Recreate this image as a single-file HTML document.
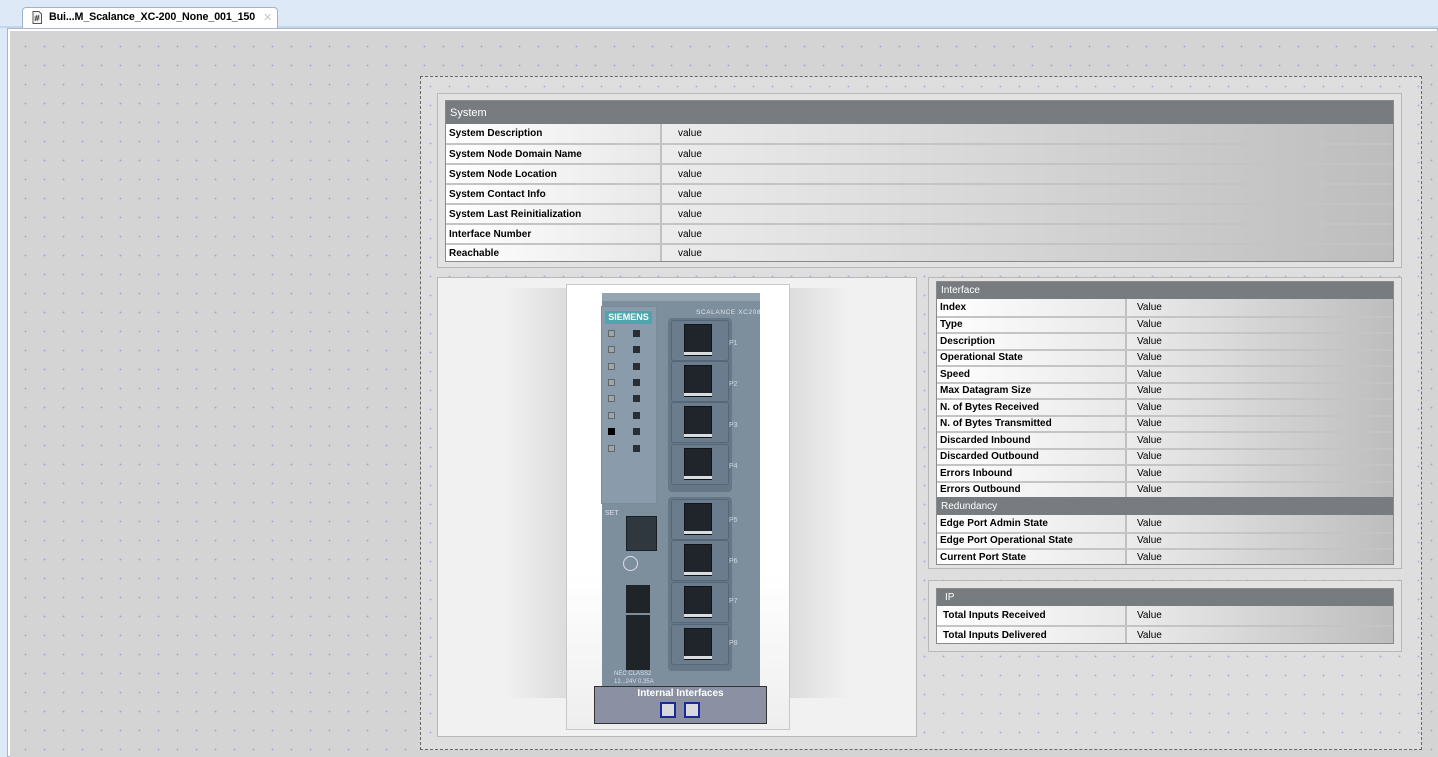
<!DOCTYPE html>
<html><head><meta charset="utf-8"><style>
*{margin:0;padding:0;box-sizing:border-box}
body{width:1438px;height:757px;overflow:hidden;background:#dde9f7;font-family:"Liberation Sans",Arial,sans-serif;position:relative}
.a{position:absolute}
.dots{background-color:#d4d4d4;background-image:radial-gradient(circle,#a9a9d8 0.8px,transparent 1px);background-size:19px 19px;background-position:6px 6px}
.tbl{position:absolute;border:1px solid #8a8a8a;background:#fff;overflow:hidden}
.hd{background:#787c80;color:#fff;font-size:11px;padding-left:4px;display:flex;align-items:center}
.row{display:flex;border-top:2px solid #c4c4c4;font-size:10px;font-weight:bold;color:#000}
.row .l{background:linear-gradient(90deg,#fff,#e8e8e8);display:flex;align-items:center;padding-left:3px;border-right:2px solid #c0c0c0}
.row .r{flex:1;background:linear-gradient(90deg,#ececec,#bdbdbd);display:flex;align-items:center;padding-left:16px;font-weight:normal}
.it .row{height:16.5px}
.it .r{padding-left:10px}
.port{position:absolute;left:671px;width:58px;height:41px;background:#6b7d8d;border:1px solid #56677a;border-radius:3px}
.port i{position:absolute;left:12px;top:3px;width:28px;height:32px;background:#1f252b;border:1px solid #101418}
.port b{position:absolute;left:12px;top:31px;width:28px;height:3px;background:#d8dde0}
.pl{position:absolute;left:729px;font-size:7px;color:#d0d8e0}
.led{position:absolute;width:7px;height:7px}
</style></head><body>
<div class="a" style="left:0;top:26px;width:1438px;height:2px;background:#c5d6ea"></div>
<div class="a" style="left:22px;top:7px;width:256px;height:22px;background:#fff;border:1px solid #9fb4cc;border-bottom:none;border-radius:4px 4px 0 0"></div>
<svg class="a" style="left:32px;top:11px" width="10" height="13"><path d="M1 .5h6l2.5 2.5v9.5h-8.5z" fill="#f3f3f3" stroke="#555"/><path d="M3 10l2-6M5 10l2-6M2.5 6h5M2.5 8h5" stroke="#333" stroke-width=".8"/></svg>
<div class="a" style="left:49px;top:11px;font-size:10.7px;font-weight:bold;color:#000;letter-spacing:-0.1px">Bui...M_Scalance_XC-200_None_001_150</div>
<div class="a" style="left:263px;top:11px;font-size:11px;color:#c8c8c8">✕</div>
<div class="a" style="left:7px;top:28px;width:1431px;height:729px;background:#fff;border:1px solid #a7b6c8"></div>
<div class="a dots" style="left:10px;top:31px;width:1428px;height:726px"></div>

<div class="a" style="left:420px;top:76px;width:1002px;height:674px;border:1px dashed #666;background-color:#dedede;background-image:radial-gradient(circle,#b0b0de 0.8px,transparent 1px);background-size:19px 19px"></div>

<!-- system -->
<div class="a" style="left:437px;top:93px;width:965px;height:175px;border:1px solid #b8b8b8;background:#e2e2e2"></div>
<div class="tbl" style="left:445px;top:100px;width:949px;height:162px">
<div class="hd" style="height:23px">System</div>
<div class="row" style="height:19px;border-top:none"><div class="l" style="width:216px">System Description</div><div class="r">value</div></div>
<div class="row" style="height:20px"><div class="l" style="width:216px">System Node Domain Name</div><div class="r">value</div></div>
<div class="row" style="height:20px"><div class="l" style="width:216px">System Node Location</div><div class="r">value</div></div>
<div class="row" style="height:20px"><div class="l" style="width:216px">System Contact Info</div><div class="r">value</div></div>
<div class="row" style="height:20px"><div class="l" style="width:216px">System Last Reinitialization</div><div class="r">value</div></div>
<div class="row" style="height:20px"><div class="l" style="width:216px">Interface Number</div><div class="r">value</div></div>
<div class="row" style="height:19px"><div class="l" style="width:216px">Reachable</div><div class="r">value</div></div>
</div>

<!-- device panel -->
<div class="a" style="left:437px;top:277px;width:480px;height:460px;border:1px solid #b8b8b8;background:#f1f1f1"></div>
<div class="a" style="left:508px;top:288px;width:60px;height:410px;background:linear-gradient(90deg,#f0f0f0,#dcdcdc)"></div>
<div class="a" style="left:788px;top:288px;width:60px;height:410px;background:linear-gradient(90deg,#dcdcdc,#f0f0f0)"></div>
<div class="a" style="left:566px;top:284px;width:224px;height:446px;background:linear-gradient(#fff 65%,#eee);border:1px solid #c8c8c8"></div>
<div class="a" style="left:602px;top:293px;width:158px;height:394px;background:#7d8e9d;border-radius:3px 3px 0 0"></div>
<div class="a" style="left:602px;top:293px;width:158px;height:8px;background:#95a4b1"></div>
<div class="a" style="left:601px;top:306px;width:56px;height:198px;background:#8a9cab;border:1px solid #7a8b99"></div>
<div class="a" style="left:605px;top:311px;width:47px;height:13px;background:#4ea5ab;color:#fff;font-size:9px;font-weight:bold;text-align:center;line-height:13px">SIEMENS</div>
<div class="a" style="left:696px;top:309px;font-size:6.5px;color:#dde3e8;letter-spacing:0.6px">SCALANCE XC208</div>
<div class="led" style="left:608px;top:330px;background:#98a6b2;border:1px solid #666"></div>
<div class="led" style="left:608px;top:346px;background:#98a6b2;border:1px solid #666"></div>
<div class="led" style="left:608px;top:363px;background:#98a6b2;border:1px solid #666"></div>
<div class="led" style="left:608px;top:379px;background:#98a6b2;border:1px solid #666"></div>
<div class="led" style="left:608px;top:395px;background:#98a6b2;border:1px solid #666"></div>
<div class="led" style="left:608px;top:412px;background:#98a6b2;border:1px solid #666"></div>
<div class="led" style="left:608px;top:428px;background:#000"></div>
<div class="led" style="left:608px;top:445px;background:#98a6b2;border:1px solid #666"></div>
<div class="led" style="left:633px;top:330px;background:#2a2e33"></div>
<div class="led" style="left:633px;top:346px;background:#2a2e33"></div>
<div class="led" style="left:633px;top:363px;background:#2a2e33"></div>
<div class="led" style="left:633px;top:379px;background:#2a2e33"></div>
<div class="led" style="left:633px;top:395px;background:#2a2e33"></div>
<div class="led" style="left:633px;top:412px;background:#2a2e33"></div>
<div class="led" style="left:633px;top:428px;background:#2a2e33"></div>
<div class="led" style="left:633px;top:445px;background:#2a2e33"></div>
<div class="a" style="left:668px;top:318px;width:64px;height:174px;background:#667788;border-radius:4px"></div>
<div class="a" style="left:668px;top:497px;width:64px;height:174px;background:#667788;border-radius:4px"></div>
<div class="port" style="top:320px"><i></i><b></b></div>
<div class="port" style="top:361px"><i></i><b></b></div>
<div class="port" style="top:402px"><i></i><b></b></div>
<div class="port" style="top:444px"><i></i><b></b></div>
<div class="port" style="top:499px"><i></i><b></b></div>
<div class="port" style="top:540px"><i></i><b></b></div>
<div class="port" style="top:582px"><i></i><b></b></div>
<div class="port" style="top:624px"><i></i><b></b></div>
<div class="pl" style="top:340px">P1</div><div class="pl" style="top:381px">P2</div><div class="pl" style="top:422px">P3</div><div class="pl" style="top:463px">P4</div>
<div class="pl" style="top:517px">P5</div><div class="pl" style="top:558px">P6</div><div class="pl" style="top:598px">P7</div><div class="pl" style="top:640px">P8</div>
<div class="a" style="left:605px;top:510px;font-size:7px;color:#dde">SET</div>
<div class="a" style="left:626px;top:516px;width:31px;height:35px;background:#2f373f;border:1px solid #1a1f24"></div>
<div class="a" style="left:623px;top:556px;width:15px;height:15px;border:1.5px solid #dde;border-radius:50%"></div>
<div class="a" style="left:626px;top:585px;width:24px;height:28px;background:#1f2429"></div>
<div class="a" style="left:626px;top:615px;width:24px;height:55px;background:#1f2429"></div>
<div class="a" style="left:614px;top:670px;font-size:6px;color:#dde;line-height:8px">NEC CLASS2<br>12...24V 0.35A</div>
<div class="a" style="left:594px;top:686px;width:173px;height:38px;background:#8b91a3;border:1px solid #333"></div>
<div class="a" style="left:594px;top:688px;width:173px;text-align:center;font-size:10px;font-weight:bold;color:#fff">Internal Interfaces</div>
<div class="a" style="left:660px;top:702px;width:16px;height:16px;border:2px solid #1a2a9a;background:#d8d8e0"></div>
<div class="a" style="left:684px;top:702px;width:16px;height:16px;border:2px solid #1a2a9a;background:#d8d8e0"></div>

<!-- interface -->
<div class="a" style="left:928px;top:277px;width:474px;height:292px;border:1px solid #b8b8b8;background:#e2e2e2"></div>
<div class="tbl it" style="left:936px;top:281px;width:458px;height:284px;font-size:9px">
<div class="hd" style="height:17px;font-size:10px">Interface</div>
<div class="row" style="border-top:none"><div class="l" style="width:190px">Index</div><div class="r">Value</div></div>
<div class="row"><div class="l" style="width:190px">Type</div><div class="r">Value</div></div>
<div class="row"><div class="l" style="width:190px">Description</div><div class="r">Value</div></div>
<div class="row"><div class="l" style="width:190px">Operational State</div><div class="r">Value</div></div>
<div class="row"><div class="l" style="width:190px">Speed</div><div class="r">Value</div></div>
<div class="row"><div class="l" style="width:190px">Max Datagram Size</div><div class="r">Value</div></div>
<div class="row"><div class="l" style="width:190px">N. of Bytes Received</div><div class="r">Value</div></div>
<div class="row"><div class="l" style="width:190px">N. of Bytes Transmitted</div><div class="r">Value</div></div>
<div class="row"><div class="l" style="width:190px">Discarded Inbound</div><div class="r">Value</div></div>
<div class="row"><div class="l" style="width:190px">Discarded Outbound</div><div class="r">Value</div></div>
<div class="row"><div class="l" style="width:190px">Errors Inbound</div><div class="r">Value</div></div>
<div class="row"><div class="l" style="width:190px">Errors Outbound</div><div class="r">Value</div></div>
<div class="hd" style="height:18px;font-size:10px">Redundancy</div>
<div class="row" style="border-top:none"><div class="l" style="width:190px">Edge Port Admin State</div><div class="r">Value</div></div>
<div class="row"><div class="l" style="width:190px">Edge Port Operational State</div><div class="r">Value</div></div>
<div class="row"><div class="l" style="width:190px">Current Port State</div><div class="r">Value</div></div>
</div>

<!-- IP -->
<div class="a" style="left:928px;top:580px;width:474px;height:72px;border:1px solid #b8b8b8;background:#e2e2e2"></div>
<div class="tbl it" style="left:936px;top:588px;width:458px;height:56px">
<div class="hd" style="height:17px;font-size:10px;padding-left:8px">IP</div>
<div class="row" style="height:19px;border-top:none"><div class="l" style="width:190px;padding-left:6px">Total Inputs Received</div><div class="r">Value</div></div>
<div class="row" style="height:18px"><div class="l" style="width:190px;padding-left:6px">Total Inputs Delivered</div><div class="r">Value</div></div>
</div>
</body></html>
